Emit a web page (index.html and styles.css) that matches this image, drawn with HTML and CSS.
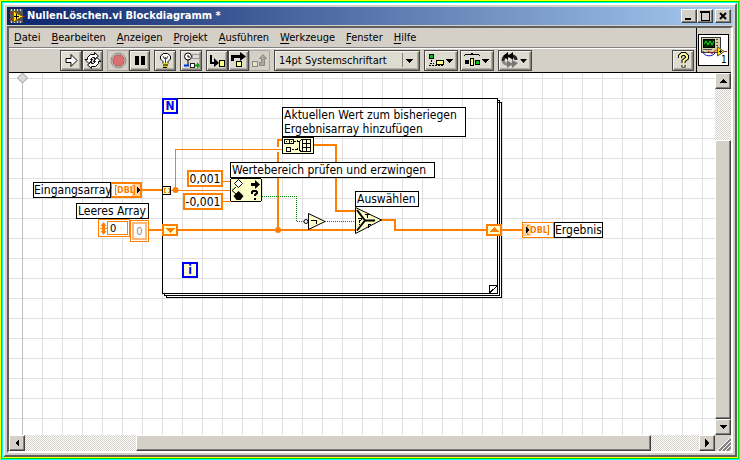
FILE: index.html
```html
<!DOCTYPE html>
<html lang="de">
<head>
    <meta charset="UTF-8">
    <meta name="viewport" content="width=device-width, initial-scale=1.0">
    <title>NullenLöschen.vi Blockdiagramm *</title>
    <link rel="stylesheet" href="styles.css">
</head>
<body>
    <div class="edge yellow"><div class="edge green"><div class="edge cyan">
    <div class="window">
        <header class="titlebar">
            <svg class="app-icon" width="16" height="16" shape-rendering="crispEdges">
                <rect x="1" y="1" width="13" height="14" fill="#555"/>
                <path d="M2 2h11M2 14h11" stroke="#ddd" stroke-width="2" stroke-dasharray="1 2"/>
                <path d="M0 5.500h5M0 11.500h5M10 8.500h6" stroke="#e01010"/>
                <path d="M4 3L14 8.500L4 14Z" fill="#ffe800" stroke="#806000"/>
                <path d="M5 8.500h5M7.500 6v5" stroke="#000"/>
            </svg>
            <h1>NullenLöschen.vi Blockdiagramm *</h1>
            <button class="win-btn" aria-label="Minimieren"><svg width="12" height="10"><path d="M2 8h6" stroke="#000" stroke-width="2"/></svg></button>
            <button class="win-btn" aria-label="Maximieren"><svg width="12" height="10" shape-rendering="crispEdges"><path d="M2 1h8v8h-8z" fill="none" stroke="#000"/><path d="M1 1h10" stroke="#000" stroke-width="2"/></svg></button>
            <button class="win-btn close" aria-label="Schließen"><svg width="12" height="10"><path d="M3 2l6 6M9 2l-6 6" stroke="#000" stroke-width="2"/></svg></button>
        </header>

        <div class="frame">
            <div class="top">
                <div class="bars">
                    <nav class="menu">
                        <a href="#"><u>D</u>atei</a>
                        <a href="#"><u>B</u>earbeiten</a>
                        <a href="#"><u>A</u>nzeigen</a>
                        <a href="#"><u>P</u>rojekt</a>
                        <a href="#"><u>A</u>usführen</a>
                        <a href="#"><u>W</u>erkzeuge</a>
                        <a href="#"><u>F</u>enster</a>
                        <a href="#"><u>H</u>ilfe</a>
                    </nav>
                    <div class="toolbar">
                        <div class="group">
                            <button class="tool" aria-label="Ausführen"><svg width="17" height="17"><path d="M3 6.500h5v-4l6 6-6 6v-4h-5z" fill="#fff" stroke="#000"/></svg></button>
                            <button class="tool" aria-label="Wiederholt ausführen"><svg width="17" height="17" fill="#fff" stroke="#000"><path d="M3.500 7.500v-2l3-3h4v-2l4 3.500-4 3.500v-2h-2l-2 2h2l-3.500 4-4-4z"/><path d="M14.500 9.500v2l-3 3h-4v2l-4-3.500 4-3.500v2h2l2-2h-2l3.500-4 4 4z"/></svg></button>
                        </div>
                        <div class="group">
                            <button class="tool off" aria-label="Abbrechen"><svg width="17" height="17"><circle cx="8.500" cy="8.500" r="7.500" fill="none" stroke="#8b8780"/><path d="M6 3h5l3 3v5l-3 3h-5l-3-3v-5z" fill="#dc7070" stroke="#a06464"/></svg></button>
                            <button class="tool" aria-label="Pause"><svg width="17" height="17"><path d="M4 4h4v9h-4zM10 4h4v9h-4z"/></svg></button>
                        </div>
                        <div class="group">
                            <button class="tool" aria-label="Highlight-Funktion"><svg width="17" height="17"><path d="M6 11.500v-2l-2.500-2.500v-3l3-2.500h4l3 2.500v3l-2.500 2.500v2z" fill="#fff" stroke="#000"/><path d="M6 4l1.500 3 1-2 1 2 1.500-3M8.500 6v5" fill="none" stroke="#444"/><path d="M6 11h5v4l-1 1h-3l-1-1z" fill="#e8d000"/><path d="M6 13h5M6 15.500h4" stroke="#000"/></svg></button>
                        </div>
                        <div class="group">
                            <button class="tool" aria-label="Werte beibehalten"><svg width="17" height="17"><circle cx="5" cy="4.500" r="3.500" fill="#fff" stroke="#000"/><path d="M5 3v2h2M5 8v5" stroke="#000" fill="none"/><rect x="9.500" y="2.500" width="7" height="4" fill="#ddd" stroke="#999"/><path d="M1 13.500h5" stroke="#0030e0" stroke-width="2"/><rect x="7.500" y="11.500" width="4" height="4" fill="#fff" stroke="#222"/><path d="M12 13.500h3" stroke="#00a020" stroke-width="2"/><path d="M14 10v7l3-3.500z" fill="#00a020"/></svg></button>
                        </div>
                        <div class="group">
                            <button class="tool" aria-label="Hineinspringen"><svg width="17" height="17"><path d="M2 3v8h4" stroke="#000" stroke-width="2" fill="none"/><path d="M5 6l5 5-5 4z"/><rect x="10.500" y="8.500" width="5" height="6" fill="#ffff80" stroke="#000"/></svg></button>
                            <button class="tool" aria-label="Überspringen"><svg width="17" height="17"><path d="M2.500 9v-4.500h9" stroke="#000" stroke-width="3" fill="none"/><path d="M10 0l6 4.500-6 4.500z"/><rect x="6.500" y="9.500" width="5" height="5" fill="#ffff80" stroke="#000"/></svg></button>
                            <button class="tool off" aria-label="Herausspringen"><svg width="17" height="17"><rect x="1.500" y="9.500" width="5" height="5" fill="#e6e3c0" stroke="#8b8780"/><path d="M8.500 13.500h5v-7h2l-3.500-4-3.500 4h2v4h-2z" fill="#aaa69c" stroke="#8b8780"/></svg></button>
                        </div>
                        <select class="tool font-select" aria-label="Schriftart">
                            <option>14pt Systemschriftart</option>
                        </select>
                        <div class="group wide">
                            <button class="tool drop" aria-label="Objekte ausrichten"><svg width="28" height="17" shape-rendering="crispEdges"><rect x="2.500" y="2.500" width="4" height="4" fill="#00c020" stroke="#000"/><path d="M4.500 8v4M3 11.500h4M2 13.500h14" stroke="#000" stroke-dasharray="2 1"/><rect x="9.500" y="8.500" width="7" height="4" fill="#ffff80" stroke="#000"/><path d="M19 7h7l-3.500 4z"/></svg></button>
                            <button class="tool drop" aria-label="Objekte verteilen"><svg width="28" height="17" shape-rendering="crispEdges"><path d="M1 3.500l2-1h5l1-1 1 1h5l2 1" stroke="#000" fill="none"/><rect x="2" y="8" width="4" height="4"/><rect x="7.500" y="6.500" width="3" height="7" fill="#ffff80" stroke="#000"/><rect x="12.500" y="8.500" width="4" height="4" fill="#00c020" stroke="#000"/><path d="M19 7h7l-3.500 4z"/></svg></button>
                        </div>
                        <button class="tool drop" aria-label="Neu anordnen"><svg width="28" height="17"><path d="M2 9c0-4 2-5 5-5h3c3 0 5 1 5 4" stroke="#222" stroke-width="3" fill="none"/><path d="M7 0v8l-5-4zM12 0v8l-5-4z"/><path d="M2 9c1 3 3 4 9 3" stroke="#888" stroke-width="3" fill="none"/><path d="M6 8v8l5-4zM11 8v8l6-5z" fill="#777"/><path d="M19 7h7l-3.500 4z"/></svg></button>
                        <button class="tool help" aria-label="Hilfe"><svg width="17" height="17"><path d="M5 6v-2l2-2h3l2 2v2l-3.500 3v2M8.500 13v2.500" fill="none" stroke="#000" stroke-width="4"/><path d="M5 6v-2l2-2h3l2 2v2l-3.500 3v2M8.500 13v2" fill="none" stroke="#ffff90" stroke-width="2"/></svg></button>
                    </div>
                </div>
                <div class="vi-pane">
                    <svg width="31" height="32">
                        <rect x="0.500" y="0.500" width="30" height="31" fill="#fff" stroke="#000"/>
                        <g shape-rendering="crispEdges">
                            <rect x="3" y="3" width="19" height="15" fill="#d8d0a0" stroke="#333"/>
                            <rect x="5" y="5" width="11" height="8" fill="#003000" stroke="#000"/>
                            <path d="M18 5h2M18 8h2M18 11h2M5 15h9" stroke="#555"/>
                        </g>
                        <path d="M6 10l2-3 2 4 2-4 2 4 2-4" fill="none" stroke="#20e020"/>
                        <path d="M5 17c0 6 10 6 12 2" fill="none" stroke="#1010c0"/>
                        <path d="M9 19c2-5 4 3 6 0s3-3 5-3M25 17.500h4" fill="none" stroke="#e01010"/>
                        <path d="M19.500 13v9l7-4.500z" fill="#ffe800" stroke="#555"/>
                        <path d="M21 17.500h3M22.500 16v3" stroke="#000"/>
                        <text class="vi-number" x="23" y="29">1</text>
                    </svg>
                </div>
            </div>

            <div class="work">
                <main class="diagram">
                    <svg class="wires" shape-rendering="crispEdges">
                        <!-- coordinates below are window coordinates -->
                        <g transform="translate(-9 -73)">
                            <path d="M22.500 73v400" stroke="#c0c0c0"/>
                            <path d="M22.500 73l5 5-5 5-5-5z" fill="#d8d8d8" stroke="#c0c0c0"/>

                            <!-- for loop -->
                            <g fill="none" stroke="#000">
                                <path d="M498 102.500h3.500v195h-335v-3"/>
                                <path d="M498 100.500h1.500v195h-335v-2"/>
                                <rect x="162.500" y="98.500" width="335" height="195"/>
                            </g>
                            <path d="M489.500 293v-7.500h8z" fill="#fff" stroke="#000"/>
                            <path d="M489.500 293.500l8-8" stroke="#000"/>

                            <!-- array and scalar wires -->
                            <g fill="none" stroke="#ff8000" stroke-width="2">
                                <path d="M141 190h22M149 230h14M178 230h178M501 230h21"/>
                                <path d="M278 230v-90h5"/>
                                <path d="M313 145h23v66h20M381 220h14v10h92"/>
                            </g>
                            <path d="M276 149.500h5" stroke="#fff" stroke-width="5"/>
                            <path d="M171 190.500h60M175.500 190v-40.500h107M222 181.500h9M222 201.500h9" fill="none" stroke="#ff8000"/>
                            <g fill="#ff8000" shape-rendering="auto">
                                <circle cx="175.500" cy="190" r="3"/>
                                <circle cx="278" cy="230" r="3"/>
                            </g>
                            <path d="M262 196.500h34.500v25h8M325 221.500h31" fill="none" stroke="#008000" stroke-dasharray="1 1"/>

                            <!-- loop tunnel and shift registers -->
                            <rect x="162.500" y="186.500" width="8" height="8" fill="#ffffcc" stroke="#000"/>
                            <path d="M166 188.500h-1.500v4h1.500M168 188.500h1.500v4h-1.500" fill="none" stroke="#ff8000"/>
                            <g fill="#ffffcc" stroke="#ff8000" stroke-width="2">
                                <rect x="163" y="225" width="14" height="10"/>
                                <rect x="487" y="225" width="14" height="10"/>
                            </g>
                            <path d="M165 228h10l-5 5zM489 232h10l-5-5z" fill="#ff8000"/>

                            <!-- build array -->
                            <g fill="#ffffcc" stroke="#000">
                                <rect x="282.500" y="137.500" width="31" height="16"/>
                                <path d="M284.500 139.500h9v4h-9zM289.500 139.500v4M286 141.500h1M291 141.500h1M286.500 147.500h4v4h-4z"/>
                                <path d="M294 141.500h5M297.500 140v3M292 149.500h6M297.500 148v3" stroke-dasharray="2 1"/>
                                <path d="M301.500 139l-2 3v8l2 2M302.500 139.500h8v12h-8zM306.500 139.500v12M302.500 143.500h8M302.500 147.500h8"/>
                            </g>

                            <!-- in range and coerce -->
                            <rect x="230.500" y="178.500" width="31" height="23" rx="2" fill="#ffffcc" stroke="#000"/>
                            <g shape-rendering="auto">
                                <path d="M238.500 179.500l4 4-4 4-4-4z" fill="#fff" stroke="#000"/>
                                <path d="M236 187l-4 3.500 4 3.500" fill="none" stroke="#000"/>
                                <path d="M238.500 191l5 5-3 4h-4l-3-4z"/>
                                <path d="M251 183h4v-3l5 4.500-5 4.500v-3h-4z"/>
                                <path d="M252 194v-2l1-1h3l1 1v1l-2 2v1M255 198v2" fill="none" stroke="#000" stroke-width="2"/>
                            </g>

                            <!-- not -->
                            <g shape-rendering="auto">
                                <path d="M308.500 213.500l16.500 8-16.500 8z" fill="#ffffcc" stroke="#000"/>
                                <circle cx="306" cy="221.500" r="2" fill="#fff" stroke="#000"/>
                            </g>
                            <path d="M311 220.500h5.500v3" fill="none" stroke="#000"/>

                            <!-- select -->
                            <path d="M355.500 207.500l26 12.500-26 13.500z" fill="#ffffcc" stroke="#000" shape-rendering="auto"/>
                            <path d="M357 210l8 10.500h10M365 220.500l-8 10" fill="none" stroke="#000" stroke-width="2" shape-rendering="auto"/>
                            <path d="M358 219v-1h3v2l-1.500 1v2M359 224.500h1M367.500 214v4M365 214.500h5M368.500 224v4M368 224.500h3M368 226.500h2" fill="none" stroke="#000"/>

                            <!-- input and output terminals -->
                            <rect x="111" y="183" width="30" height="14" fill="#fff" stroke="#ff8000" stroke-width="2"/>
                            <rect x="132" y="184" width="8" height="12" fill="#ffd0a0"/>
                            <path d="M117 185.500h-1.500v9h1.500M133 185.500h1.500v9h-1.500" fill="none" stroke="#ff8000"/>
                            <text class="dbl" x="117" y="193">DBL</text>
                            <path d="M137 187v6l3-3z"/>
                            <rect x="522.500" y="222.500" width="31" height="15" fill="#fff" stroke="#ff8000"/>
                            <rect x="523" y="224" width="8" height="12" fill="#ffd0a0"/>
                            <path d="M529 225.500h-1.500v9h1.500M547 225.500h1.500v9h-1.500" fill="none" stroke="#ff8000"/>
                            <text class="dbl" x="530" y="233">DBL</text>
                            <path d="M526 227v6l3-3z"/>
                        </g>
                    </svg>

                    <span class="loop-box count">N</span>
                    <span class="loop-box index">i</span>
                    <span class="caption input-array">Eingangsarray</span>
                    <label class="caption empty-array" for="leer">Leeres Array</label>
                    <div class="array-index">
                        <svg width="7" height="13"><path d="M0 6.500h7" stroke="#ff8000"/><path d="M3.500 0l3 4h-6zM3.500 13l3-4h-6zM2 4h3v2h-3zM2 7h3v2h-3z" fill="#ff8000"/></svg>
                        <input id="leer" value="0">
                    </div>
                    <input class="array-element" aria-label="Element" value="0" disabled>
                    <span class="caption append">Aktuellen Wert zum bisheriegen<br>Ergebnisarray hinzufügen</span>
                    <span class="caption range">Wertebereich prüfen und erzwingen</span>
                    <span class="caption choose">Auswählen</span>
                    <span class="caption result">Ergebnis</span>
                    <input class="constant upper" aria-label="Oberer Grenzwert" value="0,001">
                    <input class="constant lower" aria-label="Unterer Grenzwert" value="-0,001">
                </main>
                <div class="scroll vertical">
                    <button aria-label="Nach oben"><svg width="8" height="8" shape-rendering="crispEdges"><path d="M0 6h8l-4-4z"/></svg></button>
                    <div class="track"><div class="thumb"></div></div>
                    <button aria-label="Nach unten"><svg width="8" height="8" shape-rendering="crispEdges"><path d="M0 2h8l-4 4z"/></svg></button>
                </div>
                <div class="scroll horizontal">
                    <button aria-label="Nach links"><svg width="8" height="8" shape-rendering="crispEdges"><path d="M6 0v8l-4-4z"/></svg></button>
                    <div class="track"><div class="thumb"></div></div>
                    <button aria-label="Nach rechts"><svg width="8" height="8" shape-rendering="crispEdges"><path d="M2 0v8l4-4z"/></svg></button>
                </div>
                <svg class="grip" width="16" height="16"><path d="M4 16l12-12M8 16l8-8M12 16l4-4" stroke="#808080" stroke-width="2"/><path d="M2 16l14-14M6 16l10-10M10 16l6-6" stroke="#fff"/></svg>
            </div>
        </div>
    </div>
    </div></div></div>
</body>
</html>
```

FILE: styles.css
```css
* {
    box-sizing: border-box;
}
body {
    margin: 0;
    height: 100vh;
    overflow: hidden;
    font-family: "DejaVu Sans Condensed", "DejaVu Sans", sans-serif;
    font-size: 11px;
    color: #000;
}
button, input, select {
    font: inherit;
    color: inherit;
    margin: 0;
    padding: 0;
    border-radius: 0;
}
svg {
    display: block;
    flex: none;
}

/* coloured outline round the window */
.edge {
    height: 100%;
    border: 1px solid;
}
.yellow {
    height: 100vh;
    border-color: #ffff00 #00ffff #00ffff #ffff00;
}
.green {
    border-color: #00e000;
}
.cyan {
    border-color: #00ffff #ffff00 #ffff00 #00ffff;
}
.window {
    height: 100%;
    display: flex;
    flex-direction: column;
    padding: 2px;
    background: #d4d0c8;
    border: 2px solid;
    border-color: #ffffff #606060 #606060 #ffffff;
}

.titlebar {
    height: 18px;
    flex: none;
    display: flex;
    align-items: center;
    padding: 0 2px;
    background: linear-gradient(to right, #0a246a, #a6caf0);
}
.titlebar h1 {
    flex: 1;
    margin: 0 0 0 2px;
    color: #ffffff;
    font-size: 11px;
    line-height: 18px;
    white-space: nowrap;
}
.win-btn, .scroll button, .thumb {
    display: flex;
    align-items: center;
    justify-content: center;
    background: #d4d0c8;
    border: 1px solid;
    border-color: #ffffff #404040 #404040 #ffffff;
    box-shadow: inset -1px -1px #808080;
}
.win-btn {
    width: 16px;
    height: 14px;
}
.win-btn.close {
    margin-left: 2px;
}

.frame {
    flex: 1;
    min-height: 0;
    margin-top: 1px;
    display: flex;
    flex-direction: column;
    border: 2px solid;
    border-color: #606060 #ffffff #ffffff #606060;
}
.top {
    flex: none;
    display: flex;
    background: #d4d0c8;
    border-bottom: 1px solid #000000;
}
.bars {
    flex: 1;
}
.menu {
    height: 20px;
    display: flex;
    align-items: center;
    gap: 11px;
    padding: 0 5px;
    border-bottom: 1px solid #808080;
}
.menu a {
    color: #000000;
    text-decoration: none;
    white-space: nowrap;
}
.menu u {
    text-underline-offset: 2px;
}
.toolbar {
    height: 24px;
    display: flex;
    align-items: center;
    gap: 4px;
    padding: 0 2px 0 51px;
    border-top: 1px solid #ffffff;
}
.group {
    display: flex;
}
.group.wide {
    gap: 2px;
}
.tool {
    width: 22px;
    height: 21px;
    display: flex;
    align-items: center;
    justify-content: center;
    background: #dedbd0;
    border: 1px solid #484848;
    box-shadow: inset 1px 1px #f4f2ea, inset -1px -1px #85827a, inset -2px -2px #b0ada4;
}
.group .tool + .tool:not(.drop) {
    width: 21px;
}
.tool.off {
    background: #d4d0c8;
    border-color: #a8a59c;
    box-shadow: none;
}
.tool.drop {
    width: 34px;
}
.tool.help {
    margin-left: auto;
}
.font-select {
    width: 146px;
    padding: 0 4px;
    appearance: none;
    background: linear-gradient(#000000, #000000) 131px 8px / 7px 1px no-repeat,
        linear-gradient(#000000, #000000) 132px 9px / 5px 1px no-repeat,
        linear-gradient(#000000, #000000) 133px 10px / 3px 1px no-repeat,
        linear-gradient(#000000, #000000) 134px 11px / 1px 1px no-repeat,
        linear-gradient(#808080, #808080) 127px 2px / 1px 14px no-repeat,
        #dedbd0;
}
.vi-pane {
    width: 35px;
    padding: 6px 1px;
    border-left: 1px solid #000000;
}
.vi-number {
    font-size: 10px;
}

.work {
    flex: 1;
    min-height: 0;
    display: grid;
    grid-template-columns: 1fr 16px;
    grid-template-rows: 1fr 16px;
    background: #d4d0c8;
}
.diagram {
    position: relative;
    overflow: hidden;
    background-color: #ffffff;
    background-image: linear-gradient(to right, #e0e0e0 1px, transparent 1px),
        linear-gradient(#e0e0e0 1px, transparent 1px);
    background-size: 20px 20px;
    background-position: 13px 5px;
}
.wires {
    width: 100%;
    height: 100%;
}
.dbl {
    font-family: "DejaVu Sans", sans-serif;
    font-size: 8px;
    font-weight: bold;
    fill: #ff8000;
}

/* objects placed on the diagram */
.caption, .loop-box, .constant, .array-index, .array-element {
    position: absolute;
}
.caption {
    border: 1px solid #000000;
    background: #ffffff;
    font-size: 12px;
    line-height: 14px;
    white-space: nowrap;
}
.input-array {
    left: 24px;
    top: 109px;
    width: 78px;
}
.empty-array {
    left: 67px;
    top: 130px;
    width: 73px;
    padding-left: 1px;
}
.append {
    left: 273px;
    top: 34px;
    width: 184px;
    padding-left: 1px;
}
.range {
    left: 221px;
    top: 89px;
    width: 205px;
    padding-left: 1px;
}
.choose {
    left: 346px;
    top: 118px;
    width: 64px;
    padding-left: 1px;
}
.result {
    left: 545px;
    top: 149px;
    width: 49px;
}
.loop-box {
    width: 16px;
    height: 16px;
    border: 2px solid #0000ff;
    background: #ffffcc;
    color: #0000ff;
    font-size: 12px;
    font-weight: bold;
    line-height: 12px;
    text-align: center;
}
.count {
    left: 153px;
    top: 25px;
}
.index {
    left: 173px;
    top: 189px;
}
.constant {
    height: 17px;
    border: 2px solid #ff8000;
    background: #ffffff;
    font-size: 12px;
    text-align: center;
}
.upper {
    left: 178px;
    top: 97px;
    width: 36px;
}
.lower {
    left: 174px;
    top: 120px;
    width: 40px;
}
.array-index {
    left: 89px;
    top: 146px;
    width: 32px;
    height: 18px;
    display: flex;
    align-items: center;
    padding: 1px;
    border: 1px solid #ff8000;
    background: #ffffff;
}
.array-index input {
    flex: 1;
    min-width: 0;
    height: 14px;
    padding-left: 2px;
    border: 1px solid #ff8000;
}
.array-element {
    left: 121px;
    top: 147px;
    width: 19px;
    height: 22px;
    border: 1px solid #ff8000;
    background: #ffffff;
    box-shadow: inset 0 0 0 1px #ffffff, inset 0 0 0 3px #ffb878;
    color: #909090;
    text-align: center;
}

.scroll {
    display: flex;
}
.scroll button {
    width: 16px;
    height: 16px;
    flex: none;
}
.vertical {
    flex-direction: column;
}
.track {
    flex: 1;
    display: flex;
    background: repeating-conic-gradient(#ffffff 0 25%, #d4d0c8 0 50%) 0 0 / 2px 2px;
}
.vertical .track {
    flex-direction: column;
    padding-top: 51px;
}
.horizontal .track {
    padding: 0 48px 0 111px;
}
.thumb {
    flex: 1;
}
```
